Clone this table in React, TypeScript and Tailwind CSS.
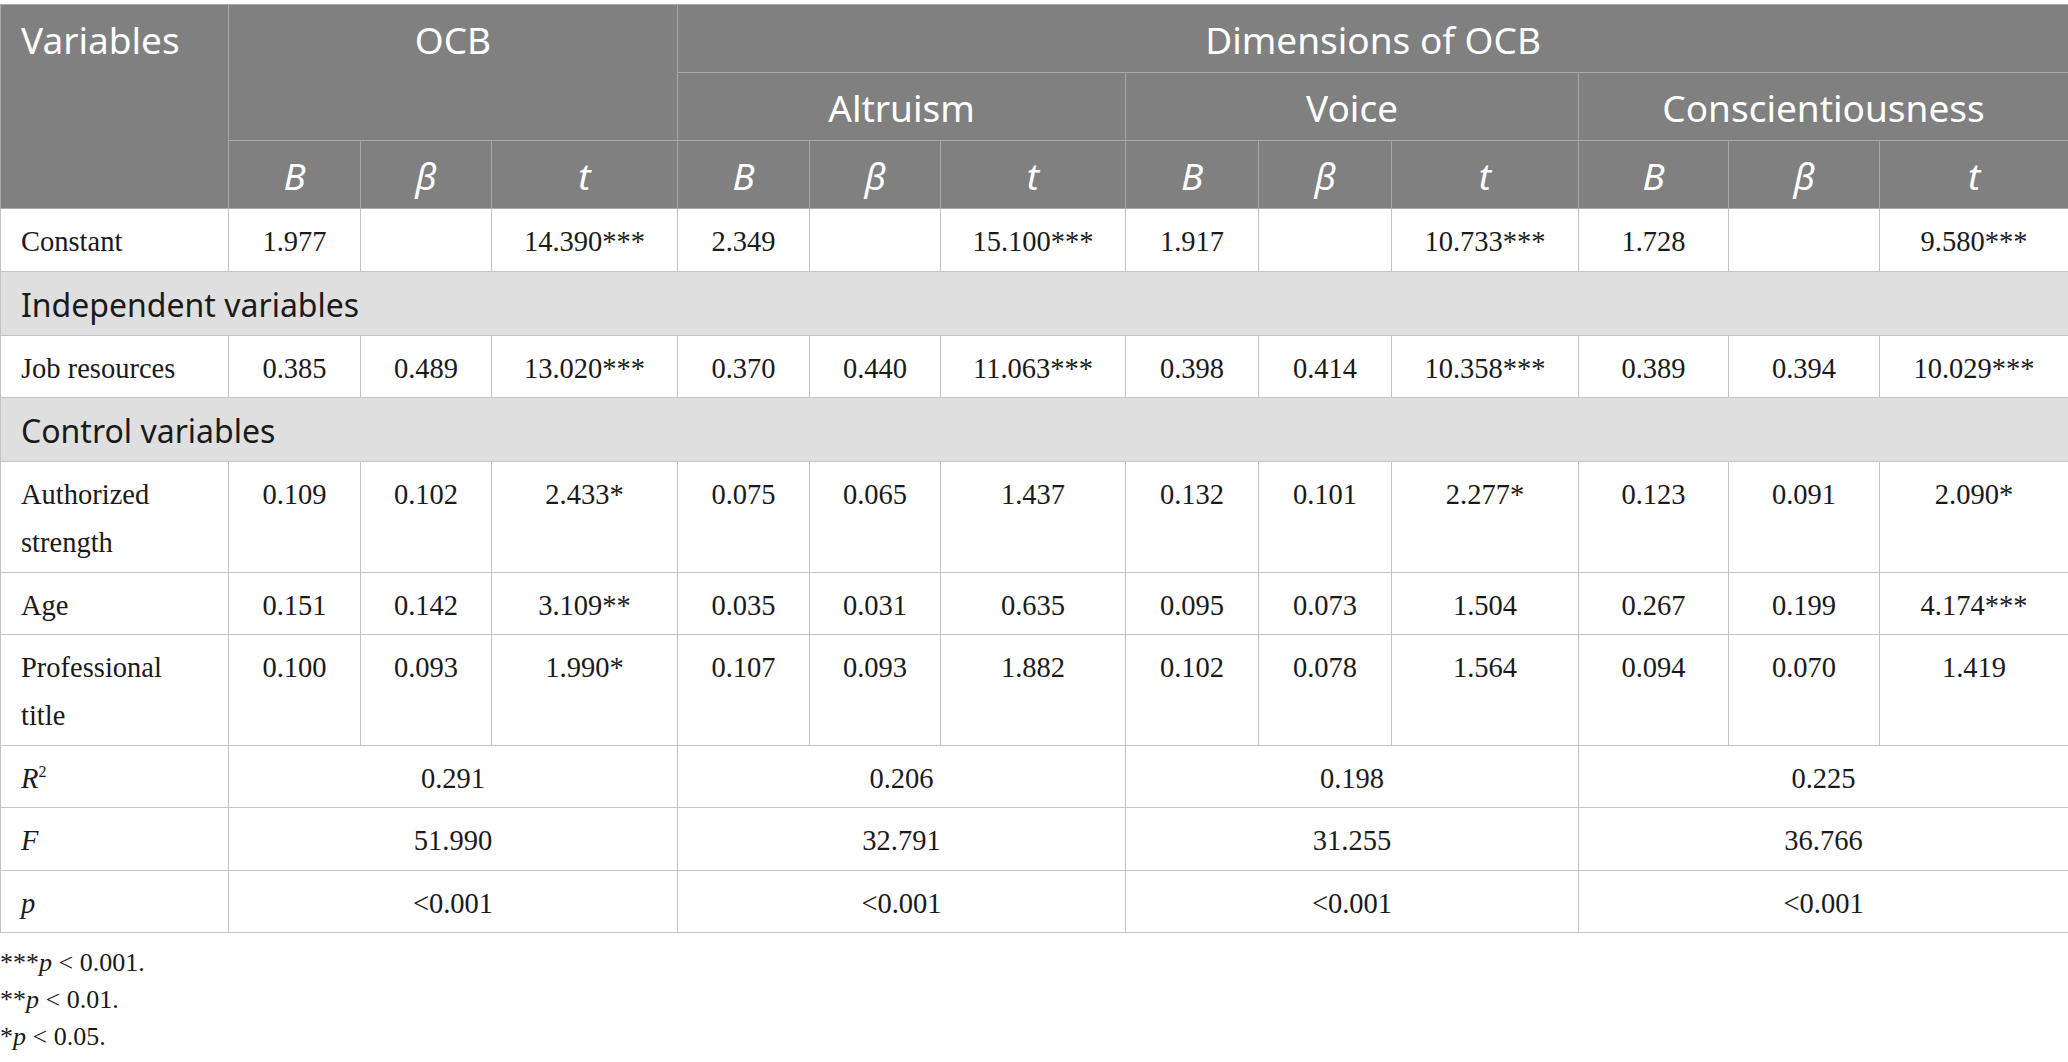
const colWidths = [228, 132, 131, 186, 132, 131, 185, 133, 133, 187, 150, 151, 189];

const groups = ["Altruism", "Voice", "Conscientiousness"];

type Row = { label: string; vals: string[] };

const constantRow: Row = {
    label: "Constant",
    vals: ["1.977", "", "14.390***", "2.349", "", "15.100***", "1.917", "", "10.733***", "1.728", "", "9.580***"],
};

const jobRow: Row = {
    label: "Job resources",
    vals: ["0.385", "0.489", "13.020***", "0.370", "0.440", "11.063***", "0.398", "0.414", "10.358***", "0.389", "0.394", "10.029***"],
};

const controlRows: Row[] = [
    {
        label: "Authorized strength",
        vals: ["0.109", "0.102", "2.433*", "0.075", "0.065", "1.437", "0.132", "0.101", "2.277*", "0.123", "0.091", "2.090*"],
    },
    {
        label: "Age",
        vals: ["0.151", "0.142", "3.109**", "0.035", "0.031", "0.635", "0.095", "0.073", "1.504", "0.267", "0.199", "4.174***"],
    },
    {
        label: "Professional title",
        vals: ["0.100", "0.093", "1.990*", "0.107", "0.093", "1.882", "0.102", "0.078", "1.564", "0.094", "0.070", "1.419"],
    },
];

const summaryRows: { label: React.ReactNode; vals: string[] }[] = [
    { label: <><i>R</i><sup className="text-[16px] top-[-11px]">2</sup></>, vals: ["0.291", "0.206", "0.198", "0.225"] },
    { label: <i>F</i>, vals: ["51.990", "32.791", "31.255", "36.766"] },
    { label: <i>p</i>, vals: ["<0.001", "<0.001", "<0.001", "<0.001"] },
];

const th = "border border-[#a9a9a9] bg-[#7f807f] text-white font-normal text-[37px] leading-[49px] pt-[10px] pb-[8px] px-[20px]";
const td = "border border-[#c3c3c3] text-[#1a1a1a] text-[28.5px] leading-[48px] pt-[9px] pb-[4.5px] px-[20px] align-top";
const sub = "border border-[#c3c3c3] bg-[#e0dfe0] text-[#1a1a1a] text-[32px] leading-[49px] pt-[8px] pb-[6px] px-[20px] text-left font-normal";

function DataRow({ row }: { row: Row }) {
    return (
        <tr>
            <td className={`${td} text-left`}>{row.label}</td>
            {row.vals.map((v, i) => (
                <td key={i} className={`${td} text-center`}>{v}</td>
            ))}
        </tr>
    );
}

export default function App() {
    return (
        <div className="w-[2068px] bg-white pt-[4px] font-['Liberation_Serif',serif]">
            <table className="table-fixed border-collapse w-[2068px]">
                <colgroup>
                    {colWidths.map((w, i) => (
                        <col key={i} style={{ width: w }} />
                    ))}
                </colgroup>
                <thead className="font-['Noto_Sans',sans-serif]">
                    <tr>
                        <th rowSpan={3} className={`${th} text-left align-top`}>Variables</th>
                        <th rowSpan={2} colSpan={3} className={`${th} text-center align-top`}>OCB</th>
                        <th colSpan={9} className={`${th} text-center`}>Dimensions of OCB</th>
                    </tr>
                    <tr>
                        {groups.map((g) => (
                            <th key={g} colSpan={3} className={`${th} text-center`}>{g}</th>
                        ))}
                    </tr>
                    <tr>
                        {[0, 1, 2, 3].flatMap((k) => [
                            <th key={`b${k}`} className={`${th} text-center italic`}>B</th>,
                            <th key={`be${k}`} className={`${th} text-center italic`}>β</th>,
                            <th key={`t${k}`} className={`${th} text-center italic`}>t</th>,
                        ])}
                    </tr>
                </thead>
                <tbody>
                    <DataRow row={constantRow} />
                    <tr>
                        <th colSpan={13} className={`${sub} font-['Noto_Sans',sans-serif]`}>Independent variables</th>
                    </tr>
                    <DataRow row={jobRow} />
                    <tr>
                        <th colSpan={13} className={`${sub} font-['Noto_Sans',sans-serif]`}>Control variables</th>
                    </tr>
                    {controlRows.map((r) => (
                        <DataRow key={r.label} row={r} />
                    ))}
                    {summaryRows.map((r, i) => (
                        <tr key={i}>
                            <td className={`${td} text-left`}>{r.label}</td>
                            {r.vals.map((v, j) => (
                                <td key={j} colSpan={3} className={`${td} text-center`}>{v}</td>
                            ))}
                        </tr>
                    ))}
                </tbody>
            </table>
            <div className="mt-[11px] text-[26px] leading-[37px] text-[#1a1a1a]">
                <p>***<i>p</i> &lt; 0.001.</p>
                <p>**<i>p</i> &lt; 0.01.</p>
                <p>*<i>p</i> &lt; 0.05.</p>
            </div>
        </div>
    );
}
